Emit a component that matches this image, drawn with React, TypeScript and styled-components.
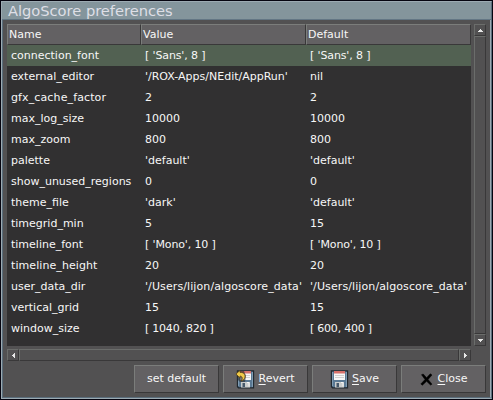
import React from "react";
import styled, { createGlobalStyle, css } from "styled-components";

const Global = createGlobalStyle`
  html, body { margin: 0; background: #05040f; overflow: hidden; }
  * { box-sizing: border-box; }
`;

const raised = css`
  border: 1px solid;
  border-color: #7b7d7b #393839 #393839 #7b7d7b;
`;

const Window = styled.div`
  width: 493px;
  height: 400px;
  padding: 1px;
  display: flex;
  flex-direction: column;
  background: #05040f;
  font: 11px/20px "DejaVu Sans", sans-serif;
  color: #f7f7f7;
`;

const Frame = styled.div`
  flex: 1;
  display: flex;
  flex-direction: column;
  border: 1px solid #9caab2;
  border-right-color: #5a6d7b;
`;

const TitleBar = styled.div`
  height: 18px;
  flex: none;
  padding-left: 6px;
  background: #84959c;
  border-bottom: 1px solid #637684;
  color: #dedfe6;
  font-size: 14.66px;
  line-height: 17px;
  letter-spacing: -0.02px;
  white-space: nowrap;
`;

const Body = styled.div`
  flex: 1;
  display: flex;
  flex-direction: column;
  background: #525152;
  border-left: 1px solid #5a6d7b;
  border-right: 1px solid #9caab2;
  border-bottom: 1px solid #5a6d7b;
  padding: 4px 4px 3px 4px;
`;

const Upper = styled.div`
  display: grid;
  grid-template-columns: 464px 12px;
  grid-template-rows: 322px 12px;
  column-gap: 3px;
  row-gap: 3px;
`;

const List = styled.div`
  background: #313031;
  overflow: hidden;
`;

const columns = css`
  display: grid;
  grid-template-columns: 134px 165px 165px;
`;

const HeaderRow = styled.div`
  ${columns}
  height: 21px;
`;

const HeaderCell = styled.div`
  ${raised}
  background: #636163;
  padding-left: 1px;
  line-height: 19px;
`;

const Row = styled.div<{ $selected?: boolean }>`
  ${columns}
  height: 21px;
  line-height: 21px;
  background: ${(p) => (p.$selected ? "#526152" : "transparent")};
`;

const Cell = styled.div<{ $tracking: number }>`
  padding-left: 4px;
  white-space: pre;
  letter-spacing: ${(p) => p.$tracking}px;
`;

const ScrollBar = styled.div<{ $vertical?: boolean }>`
  display: flex;
  flex-direction: ${(p) => (p.$vertical ? "column" : "row")};
`;

const Arrow = styled.div`
  border: 1px solid;
  border-color: #6b6d6b #393839 #393839 #6b6d6b;
  width: 12px;
  height: 12px;
  flex: none;
  display: flex;
  align-items: center;
  justify-content: center;
`;

const Thumb = styled.div`
  flex: 1;
  border: 1px solid;
  border-color: #6b6d6b #393839 #393839 #6b6d6b;
`;

const Buttons = styled.div`
  display: flex;
  justify-content: flex-end;
  gap: 4px;
  margin-top: 4px;
`;

const Button = styled.button`
  ${raised}
  width: 85px;
  height: 28px;
  flex: none;
  padding: 0;
  background: #636163;
  color: #f7f7f7;
  font: inherit;
  display: flex;
  align-items: center;
  justify-content: center;
  gap: 3px;
  white-space: nowrap;
`;

const Mnemonic = styled.span`
  text-decoration: underline;
  text-underline-offset: 2px;
  text-decoration-thickness: 1px;
`;

type Direction = "up" | "down" | "left" | "right";
const arrowPaths: Record<Direction, string> = {
  up: "M2 0h1v1h1v1h1v1H0V2h1V1h1z",
  down: "M0 0h5v1H4v1H3v1H2V2H1V1H0z",
  left: "M3 0v5H2V4H1V3H0V2h1V1h1V0z",
  right: "M0 0h1v1h1v1h1v1H2v1H1v1H0z",
};

function ArrowButton({ dir }: { dir: Direction }) {
  const wide = dir === "up" || dir === "down";
  return (
    <Arrow>
      <svg width={wide ? 5 : 3} height={wide ? 3 : 5} fill="#e7e7e7" shapeRendering="crispEdges">
        <path d={arrowPaths[dir]} />
      </svg>
    </Arrow>
  );
}

function Floppy({ revert }: { revert?: boolean }) {
  return (
    <svg width="19" height="19" viewBox="0 0 19 19">
      <path d="M1.5 .8h16v17h-15l-1-1z" fill="#5a7994" stroke="#20282f" strokeWidth="1.3" />
      <path d="M2.5 2v14M16.5 2v15" stroke="#7f9cb3" />
      <rect x="4" y="1" width="11" height="9" fill="#f7f7f7" />
      <rect x="4" y="1" width="11" height="2.5" fill="#d6716b" />
      <path d="M5 5.5h9M5 7.5h9" stroke="#cfcfcf" />
      <rect x="5" y="12" width="9" height="5.5" fill="#c9cccc" />
      <rect x="6.5" y="13" width="2.5" height="4" fill="#46596b" />
      <path d="M11 12.5h2v4" fill="none" stroke="#f5f5f5" />
      {revert && (
        <>
          <path d="M1 1h7l2 5-1 6H4L1 9z" fill="#30302f" opacity="0.65" />
          <path
            d="M0 4L4 0.4V2.4C7.8 2.2 9.6 4.4 8.9 7.4C8.4 9.4 7.2 10.4 5.3 10.8C6.9 8.8 6.6 6.4 4 6V8z"
            fill="#efca4a"
            stroke="#5b4216"
            strokeWidth="0.8"
          />
        </>
      )}
    </svg>
  );
}

const CloseIcon = () => (
  <svg width="15" height="15" viewBox="0 0 15 15">
    <path
      d="M1.5 2.7L3.2 2L6.6 5.7L10.3 1.8L12 3L8.1 7.4L12 12.2L10.5 13L6.6 9.3L2.4 13.2L.8 12L5 7.5z"
      fill="#000"
      stroke="#000"
      strokeWidth="0.5"
    />
  </svg>
);

const rows: [string, string, string][] = [
  ["connection_font", "[ 'Sans', 8 ]", "[ 'Sans', 8 ]"],
  ["external_editor", "'/ROX-Apps/NEdit/AppRun'", "nil"],
  ["gfx_cache_factor", "2", "2"],
  ["max_log_size", "10000", "10000"],
  ["max_zoom", "800", "800"],
  ["palette", "'default'", "'default'"],
  ["show_unused_regions", "0", "0"],
  ["theme_file", "'dark'", "'default'"],
  ["timegrid_min", "5", "15"],
  ["timeline_font", "[ 'Mono', 10 ]", "[ 'Mono', 10 ]"],
  ["timeline_height", "20", "20"],
  ["user_data_dir", "'/Users/lijon/algoscore_data'", "'/Users/lijon/algoscore_data'"],
  ["vertical_grid", "15", "15"],
  ["window_size", "[ 1040, 820 ]", "[ 600, 400 ]"],
];

function trackingFor(text: string): number {
  if (/^\[ \d/.test(text)) return -0.23;
  if (text.startsWith("[")) return -0.13;
  if (text.startsWith("'/Users")) return 0.1;
  if (text.startsWith("gfx")) return 0.12;
  if (text === "timeline_height") return 0.08;
  return 0;
}

export default function App() {
  return (
    <>
      <Global />
      <Window>
        <Frame>
          <TitleBar>AlgoScore preferences</TitleBar>
          <Body>
            <Upper>
              <List>
                <HeaderRow>
                  <HeaderCell>Name</HeaderCell>
                  <HeaderCell>Value</HeaderCell>
                  <HeaderCell>Default</HeaderCell>
                </HeaderRow>
                {rows.map((r, i) => (
                  <Row key={r[0]} $selected={i === 0}>
                    {r.map((text, c) => (
                      <Cell key={c} $tracking={trackingFor(text)}>{text}</Cell>
                    ))}
                  </Row>
                ))}
              </List>
              <ScrollBar $vertical>
                <ArrowButton dir="up" />
                <Thumb />
                <ArrowButton dir="down" />
              </ScrollBar>
              <ScrollBar>
                <ArrowButton dir="left" />
                <Thumb />
                <ArrowButton dir="right" />
              </ScrollBar>
            </Upper>
            <Buttons>
              <Button>set default</Button>
              <Button>
                <Floppy revert />
                <span><Mnemonic>R</Mnemonic>evert</span>
              </Button>
              <Button>
                <Floppy />
                <span><Mnemonic>S</Mnemonic>ave</span>
              </Button>
              <Button>
                <CloseIcon />
                <span><Mnemonic>C</Mnemonic>lose</span>
              </Button>
            </Buttons>
          </Body>
        </Frame>
      </Window>
    </>
  );
}
